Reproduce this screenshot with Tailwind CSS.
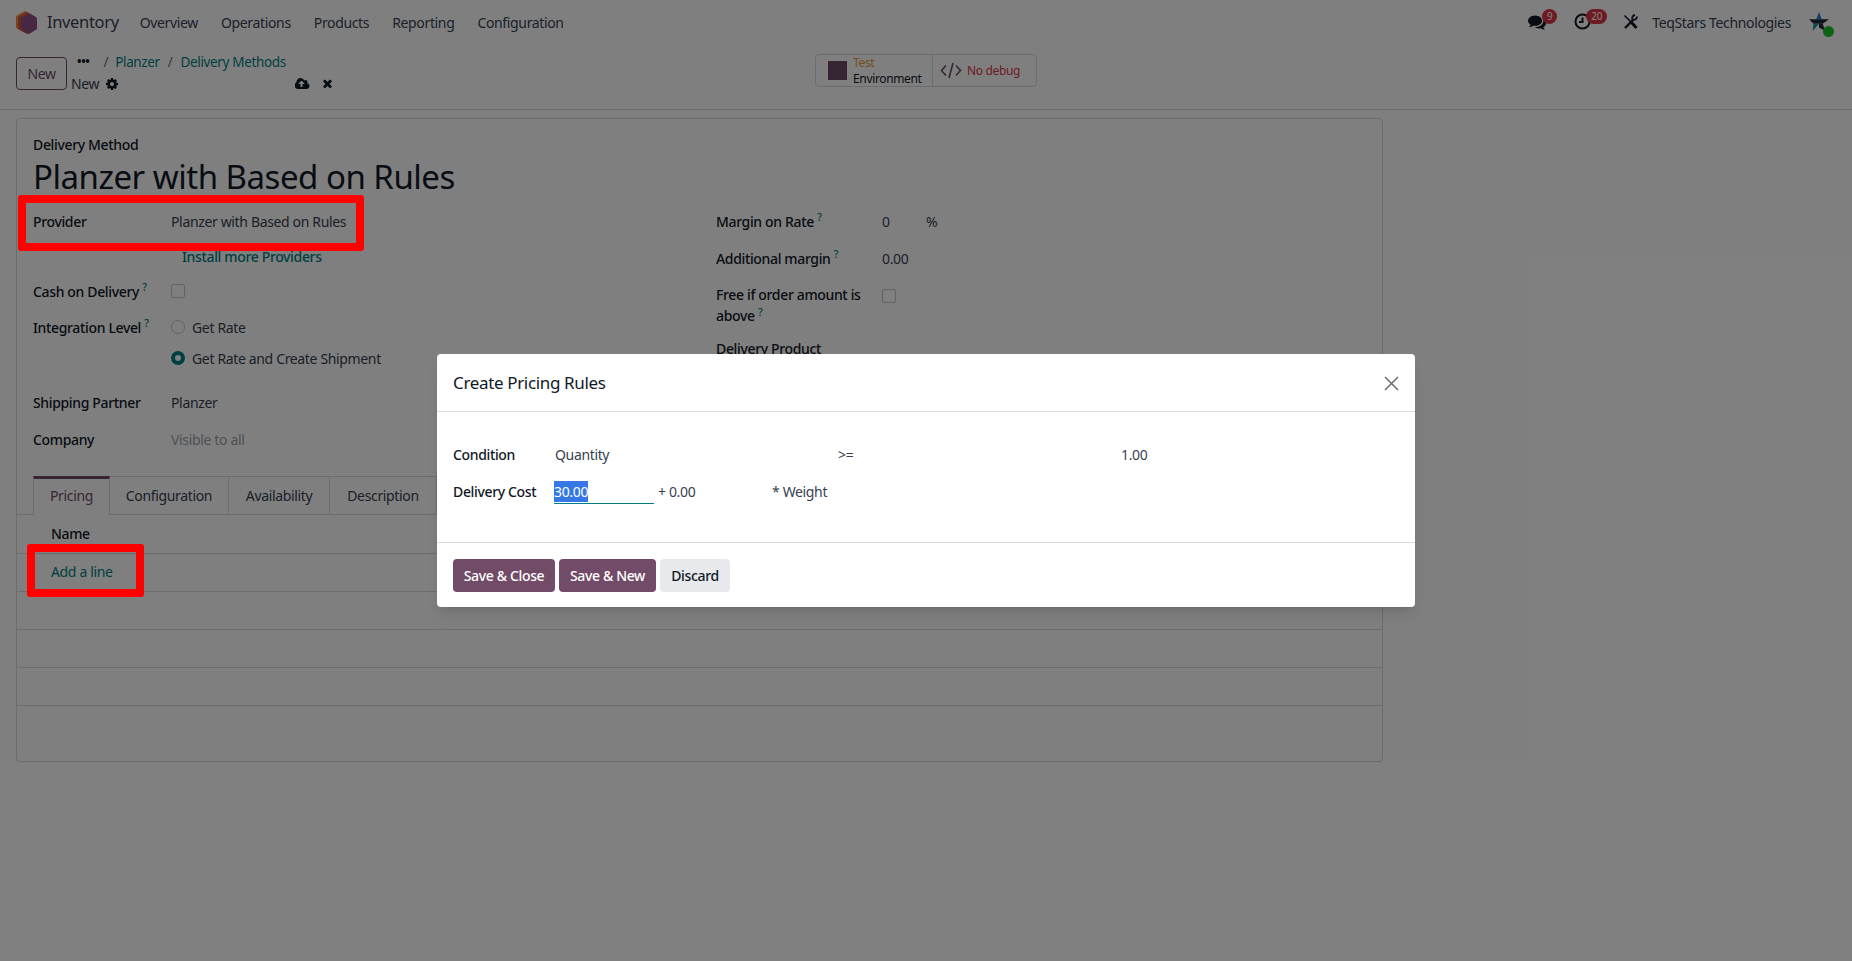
<!DOCTYPE html>
<html lang="en">
<head>
  <meta charset="UTF-8">
  <title>Planzer with Based on Rules</title>
  <script src="https://cdn.jsdelivr.net/npm/@tailwindcss/browser@4"></script>
</head>
<body class="relative h-[961px] w-[1852px] overflow-hidden bg-white font-['Noto_Sans',sans-serif] text-[14px] tracking-[-0.025em] text-[#374151]">

  <!-- Top nav -->
  <nav class="flex h-[46px] items-center pb-[2px] pl-4 pr-[21px]">
    <svg class="h-[23px] w-[21px]" viewBox="0 0 21 23">
      <path d="M9 0 18 5v12L9 22 0 17V5z" fill="#e8923a"/>
      <path d="M11 1 20 6v12l-9 5-9-5V6z" fill="#d9533f"/>
      <path d="M13 2.500 21 7v11l-8 5-8-5V7z" fill="#8f4f86"/>
    </svg>
    <span class="ml-[10px] text-[16.500px] text-[#374151]">Inventory</span>
    <div class="ml-[21px] flex gap-[23px] text-[#374151]">
      <a>Overview</a><a>Operations</a><a>Products</a><a>Reporting</a><a>Configuration</a>
    </div>
    <div class="ml-auto flex items-center">
      <div class="relative mr-[28px] h-5 w-[18px]">
        <svg class="mt-[1px] h-[18px] w-[18px]" viewBox="0 0 1792 1792" fill="#111827"><path d="M1408 768q0 139-94 257t-256.500 186.500-353.500 68.500q-86 0-176-16-124 88-278 128-36 9-86 16h-3q-11 0-20.500-8t-11.500-21q-1-3-1-6.500t.5-6.500 2-6l2.500-5 3.500-5.500 4-5 4.500-5 4-4.500q5-6 23-25t26-29.500 22.500-29 25-38.500 20.500-44q-124-72-195-177t-71-224q0-139 94-257t256.500-186.500 353.500-68.500 353.500 68.500 256.500 186.500 94 257zm384 256q0 120-71 224.500t-195 176.500q10 24 20.500 44t25 38.500 22.500 29 26 29.500 23 25q1 1 4 4.500t4.500 5 4 5 3.500 5.500l2.500 5 2 6 .5 6.500-1 6.500q-3 14-13 22t-22 7q-50-7-86-16-154-40-278-128-90 16-176 16-271 0-472-132 58 4 88 4 161 0 309-45t264-129q125-92 192-212t67-254q0-77-23-152 129 71 204 178t75 230z"/></svg>
        <span class="absolute left-[14px] top-[-3px] flex h-[15px] w-[15px] items-center justify-center rounded-full bg-[#dc3545] text-[10px] text-white">9</span>
      </div>
      <div class="relative mr-[33px] h-5 w-4">
        <svg class="mt-[1px] h-[17px] w-[17px]" viewBox="0 0 17 17" fill="none" stroke="#111827" stroke-width="2"><circle cx="8.500" cy="8.500" r="7"/><path d="M8.500 4.500v4.500H5"/></svg>
        <span class="absolute left-[12px] top-[-3px] flex h-[15px] w-[21px] items-center justify-center rounded-full bg-[#dc3545] text-[10px] text-white">20</span>
      </div>
      <svg class="mr-[14px] h-4 w-[15px]" viewBox="0 0 15 16" fill="none" stroke="#111827">
        <path d="M1.500 1.500 8 8" stroke-width="1.600"/>
        <path d="M8.500 8.500 13.500 14" stroke-width="3"/>
        <path d="M2 14 10 6" stroke-width="2.400"/>
        <path d="M14 2.500c0 2.500-2.500 4-4.500 3C8.500 4 9.500 1.500 12 1" stroke-width="1.800"/>
      </svg>
      <span class="text-[#374151]">TeqStars Technologies</span>
      <div class="relative ml-[18px] mt-[2px] h-[22px] w-[22px]">
        <svg class="h-5 w-5" viewBox="0 0 22 22">
          <path d="M11 0l3 8H8z" fill="#2f7fd0"/>
          <path d="M0 8h22l-7 5H5z" fill="#1d2b3a"/>
          <path d="M5 13h6L4 21z" fill="#1d9a8c"/>
          <path d="M11 13h4l3 8-7-4z" fill="#1d2b3a"/>
        </svg>
        <span class="absolute left-[14px] top-[14px] h-[11px] w-[11px] rounded-full bg-[#1cc42e]"></span>
      </div>
    </div>
  </nav>

  <!-- Control panel -->
  <div class="flex h-[64px] items-start border-b border-[#d8dadd] pl-4 pt-[11px]">
    <button class="h-[33px] w-[51px] rounded-[4px] border border-[#714b67] bg-white text-[#714b67]">New</button>
    <div class="-mt-[5px] ml-[4px] w-[744px]">
      <div class="flex h-5 items-center text-[13.500px]">
        <span class="ml-[6px] text-[12px] font-bold leading-none text-[#111827]">•••</span>
        <span class="ml-[14px] text-[#6b7280]">/</span>
        <a class="ml-[7px] text-[#017e84]">Planzer</a>
        <span class="ml-[8px] text-[#6b7280]">/</span>
        <a class="ml-[8px] text-[#017e84]">Delivery Methods</a>
      </div>
      <div class="flex h-[23px] items-center">
        <span class="text-[14px]">New</span>
        <svg class="ml-[6px] h-[14px] w-[14px]" viewBox="0 0 1792 1792" fill="#111827"><path d="M1152 896q0-106-75-181t-181-75-181 75-75 181 75 181 181 75 181-75 75-181zm512-109v222q0 12-8 23t-20 13l-185 28q-19 54-39 91 35 50 107 138 10 12 10 25t-9 23q-27 37-99 108t-94 71q-12 0-26-9l-138-108q-44 23-91 38-16 136-29 186-7 28-36 28h-222q-14 0-24.500-8.500t-11.500-21.500l-28-184q-49-16-90-37l-141 107q-10 9-25 9-14 0-25-11-126-114-165-168-7-10-7-23 0-12 8-23 15-21 51-66.500t54-70.500q-27-50-41-99l-183-27q-13-2-21-12.500t-8-23.500v-222q0-12 8-23t19-13l186-28q14-46 39-92-40-57-107-138-10-12-10-24 0-10 9-23 26-36 98.500-107.500t94.500-71.500q13 0 26 10l138 107q44-23 91-38 16-136 29-186 7-28 36-28h222q14 0 24.500 8.500t11.500 21.500l28 184q49 16 90 37l142-107q9-9 24-9 13 0 25 10 129 119 165 170 7 8 7 22 0 12-8 23-15 21-51 66.500t-54 70.500q26 50 41 98l183 28q13 2 21 12.500t8 23.500z"/></svg>
        <svg class="ml-[176px] h-[14px] w-[15px]" viewBox="0 0 1920 1792" fill="#111827"><path d="M1216 864q0-14-9-23l-352-352q-9-9-23-9t-23 9l-351 351q-10 12-10 24 0 14 9 23t23 9h224v352q0 13 9.500 22.500t22.500 9.500h192q13 0 22.500-9.500t9.500-22.500v-352h224q13 0 22.500-9.500t9.500-22.500zm640 288q0 159-112.500 271.500t-271.500 112.500h-1088q-185 0-316.500-131.500t-131.500-316.500q0-130 70-240t188-165q-2-30-2-43 0-212 150-362t362-150q156 0 285.500 87t188.500 231q71-62 166-62 106 0 181 75t75 181q0 76-41 138 130 31 213.500 135.500t83.500 238.500z"/></svg>
        <svg class="ml-[11px] h-[13px] w-[13px]" viewBox="0 0 1792 1792" fill="#111827"><path d="M1490 1322q0 40-28 68l-136 136q-28 28-68 28t-68-28l-294-294-294 294q-28 28-68 28t-68-28l-136-136q-28-28-28-68t28-68l294-294-294-294q-28-28-28-68t28-68l136-136q28-28 68-28t68 28l294 294 294-294q28-28 68-28t68 28l136 136q28 28 28 68t-28 68l-294 294 294 294q28 28 28 68z"/></svg>
      </div>
    </div>
    <div class="-mt-[3px] flex h-[33px] w-[222px] rounded-[4px] border border-[#d8dadd]">
      <div class="flex w-[117px] items-center border-r border-[#d8dadd] pl-3">
        <span class="h-[19px] w-[19px] bg-[#714b67]"></span>
        <div class="ml-[6px] pt-px text-[12px] leading-[16px]">
          <div class="text-[#e99d3b]">Test</div>
          <div class="text-[#111827]">Environment</div>
        </div>
      </div>
      <div class="flex items-center pl-[7px]">
        <svg class="h-[17px] w-[22px]" viewBox="0 0 22 17" fill="none" stroke="#714b67" stroke-width="1.600"><path d="M6 3.500 1.500 8.500 6 13.500M16 3.500l4.500 5-4.500 5M13 1 9 16"/></svg>
        <span class="ml-[5px] text-[12px] text-[#dc3545]">No debug</span>
      </div>
    </div>
  </div>

  <!-- Form sheet -->
  <main class="ml-4 mt-[8px] h-[644px] w-[1367px] rounded-[4px] border border-[#d8dadd]">
    <div class="pl-4 pt-4">
      <div class="h-[22px] font-medium leading-5 text-[#111827]">Delivery Method</div>
      <h1 class="h-10 text-[33px] leading-10 tracking-[-0.015em] text-[#111827]">Planzer with Based on Rules</h1>
    </div>
    <div class="grid h-[279px] grid-cols-[683px_1fr] overflow-hidden pl-4">
      <div>
        <div class="flex h-12 items-center">
          <span class="w-[138px] font-medium text-[#111827]">Provider</span><span>Planzer with Based on Rules</span>
        </div>
        <div class="flex h-[22px] items-center pl-[149px] font-medium text-[#017e84]"><span>Install more Providers</span></div>
        <div class="flex h-12 items-center">
          <span class="w-[138px] font-medium text-[#111827]">Cash on Delivery <sup class="text-[#017e84]">?</sup></span>
          <span class="h-[14px] w-[14px] rounded-[2px] border border-[#c4c7cc] bg-white"></span>
        </div>
        <div class="flex h-6 items-center">
          <span class="w-[138px] font-medium text-[#111827]">Integration Level <sup class="text-[#017e84]">?</sup></span>
          <span class="h-[14px] w-[14px] rounded-full border border-[#c4c7cc] bg-white"></span>
          <span class="ml-[7px]">Get Rate</span>
        </div>
        <div class="flex h-[38px] items-center pl-[138px]">
          <span class="h-[14px] w-[14px] rounded-full border-[4px] border-[#017e84] bg-white"></span>
          <span class="ml-[7px]">Get Rate and Create Shipment</span>
        </div>
        <div class="flex h-[50px] items-center">
          <span class="w-[138px] font-medium text-[#111827]">Shipping Partner</span><span>Planzer</span>
        </div>
        <div class="flex h-6 items-center">
          <span class="w-[138px] font-medium text-[#111827]">Company</span><span class="text-[#9ca3af]">Visible to all</span>
        </div>
      </div>
      <div>
        <div class="flex h-12 items-center">
          <span class="w-[166px] font-medium text-[#111827]">Margin on Rate <sup class="text-[#017e84]">?</sup></span>
          <span class="w-[44px]">0</span><span>%</span>
        </div>
        <div class="flex h-[26px] items-center">
          <span class="w-[166px] font-medium text-[#111827]">Additional margin <sup class="text-[#017e84]">?</sup></span><span>0.00</span>
        </div>
        <div class="flex items-start pt-[13px]">
          <span class="w-[166px] pr-3 font-medium leading-[21px] text-[#111827]">Free if order amount is above <sup class="text-[#017e84]">?</sup></span>
          <span class="mt-[5px] h-[14px] w-[14px] rounded-[2px] border border-[#c4c7cc] bg-white"></span>
        </div>
        <div class="mt-[13px] font-medium leading-5 text-[#111827]">Delivery Product</div>
      </div>
    </div>

    <!-- Tabs -->
    <div class="flex h-[39px] border-b border-[#d8dadd] pl-4">
      <a class="-mb-px flex h-[39px] w-[77px] items-center justify-center border-x border-t-[3px] border-x-[#d8dadd] border-t-[#714b67] bg-white pb-[4px] text-[#714b67]">Pricing</a>
      <a class="flex w-[119px] items-center justify-center border-r border-t border-[#d8dadd]">Configuration</a>
      <a class="flex w-[101px] items-center justify-center border-r border-t border-[#d8dadd]">Availability</a>
      <a class="flex w-[107px] items-center justify-center border-r border-t border-[#d8dadd]">Description</a>
    </div>
    <table class="w-full">
      <thead>
        <tr class="h-[38px] border-b border-[#d8dadd]"><th class="pl-[34px] text-left font-medium text-[#111827]">Name</th></tr>
      </thead>
      <tbody>
        <tr class="h-[38px] border-b border-[#d8dadd]"><td class="pb-[2px] pl-[34px] text-[#017e84]">Add a line</td></tr>
        <tr class="h-[38px] border-b border-[#d8dadd]"><td></td></tr>
        <tr class="h-[38px] border-b border-[#d8dadd]"><td></td></tr>
        <tr class="h-[38px] border-b border-[#d8dadd]"><td></td></tr>
      </tbody>
    </table>
  </main>

  <!-- Backdrop and dialog -->
  <div class="absolute inset-0 flex justify-center bg-black/50 pt-[354px]">
    <div class="h-[253px] w-[978px] rounded-[4px] bg-white shadow-lg">
      <div class="flex h-[58px] items-center justify-between border-b border-[#d8dadd] pl-4 pr-4 pt-px">
        <span class="text-[17px] text-[#111827]">Create Pricing Rules</span>
        <svg class="h-[15px] w-[15px]" viewBox="0 0 15 15" fill="none" stroke="#6b6b6b" stroke-width="1.500"><path d="M1 1l13 13M14 1 1 14"/></svg>
      </div>
      <div class="h-[131px] border-b border-[#d8dadd] pl-4 pt-[32px]">
        <div class="flex h-[21px] items-center">
          <span class="w-[102px] font-medium text-[#111827]">Condition</span>
          <span class="w-[283px]">Quantity</span>
          <span class="w-[283px]">&gt;=</span>
          <span>1.00</span>
        </div>
        <div class="mt-4 flex h-[24px] items-start">
          <span class="w-[101px] font-medium leading-[21px] text-[#111827]">Delivery Cost</span>
          <span class="h-[23px] w-[100px] border-b border-[#017e84]"><span class="inline-block h-[21px] bg-[#3577e5] leading-[21px] text-white">30.00</span></span>
          <span class="ml-1 w-[114px] leading-[21px]">+ 0.00</span>
          <span class="leading-[21px]">* Weight</span>
        </div>
      </div>
      <div class="flex gap-1 pl-4 pt-4">
        <button class="h-[33px] w-[102px] rounded-[4px] bg-[#714b67] font-medium text-white">Save &amp; Close</button>
        <button class="h-[33px] w-[97px] rounded-[4px] bg-[#714b67] font-medium text-white">Save &amp; New</button>
        <button class="h-[33px] w-[70px] rounded-[4px] bg-[#e7e9ed] font-medium text-[#111827]">Discard</button>
      </div>
    </div>
  </div>

  <!-- Red annotation boxes from the screenshot -->
  <div class="absolute left-[18px] top-[195px] h-[56px] w-[346px] rounded-[3px] border-[8px] border-[#ff0000]"></div>
  <div class="absolute left-[27px] top-[544px] h-[53px] w-[117px] rounded-[3px] border-[8px] border-[#ff0000]"></div>
</body>
</html>
